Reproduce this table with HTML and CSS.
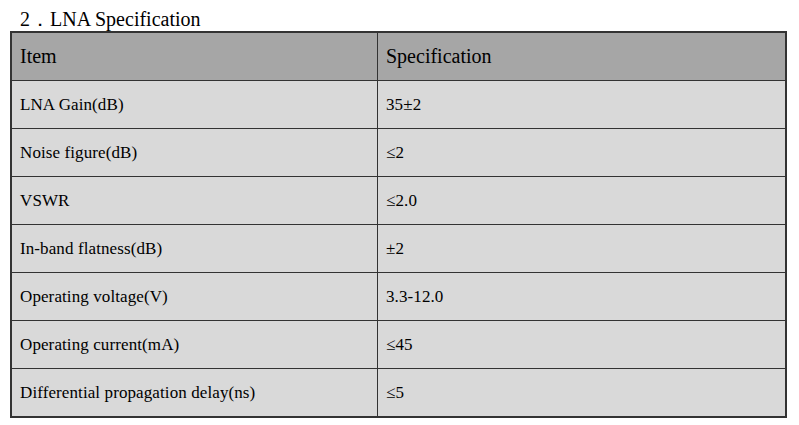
FILE: index.html
```html
<!DOCTYPE html>
<html>
<head>
<meta charset="utf-8">
<link rel="stylesheet" href="styles.css">
</head>
<body>
<div class="title">2．LNA Specification</div>
<table class="spec">
  <thead>
    <tr><th class="c1">Item</th><th>Specification</th></tr>
  </thead>
  <tbody>
    <tr><td>LNA Gain(dB)</td><td>35±2</td></tr>
    <tr><td>Noise figure(dB)</td><td>≤2</td></tr>
    <tr><td>VSWR</td><td>≤2.0</td></tr>
    <tr><td>In-band flatness(dB)</td><td>±2</td></tr>
    <tr><td>Operating voltage(V)</td><td>3.3-12.0</td></tr>
    <tr><td>Operating current(mA)</td><td>≤45</td></tr>
    <tr><td>Differential propagation delay(ns)</td><td>≤5</td></tr>
  </tbody>
</table>
</body>
</html>
```
FILE: styles.css
```css
html, body { margin: 0; padding: 0; background: #fff; }
body { font-family: "Liberation Serif", "Times New Roman", serif; color: #000; }
.title {
  font-size: 20px;
  line-height: 22px;
  padding: 8px 0 0 20px;
  height: 23px;
}
.spec {
  margin-left: 10px;
  width: 777px;
  border-collapse: collapse;
  border: 2px solid #333;
}
.spec th, .spec td {
  border: 1px solid #333;
  text-align: left;
  padding: 0 0 0 8px;
  vertical-align: middle;
}
.spec th {
  background: #a6a6a6;
  font-weight: normal;
  font-size: 20px;
  height: 47px;
}
.spec td {
  background: #d9d9d9;
  font-size: 17px;
  letter-spacing: 0.1px;
  height: 47px;
}
.spec .c1 { width: 357px; }
```
